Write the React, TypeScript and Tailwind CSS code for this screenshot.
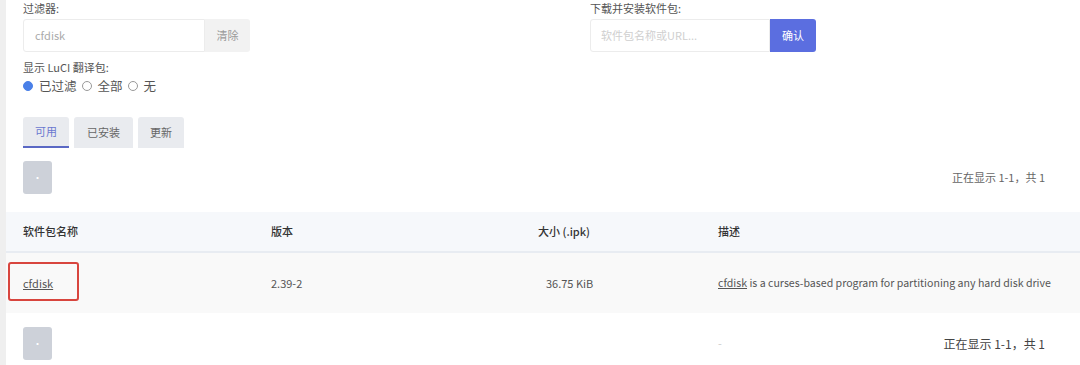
import { useState } from 'react'

const font = { fontFamily: '"Noto Sans CJK SC", "Liberation Sans", sans-serif' }

const tabs = ['可用', '已安装', '更新']

function PagerButton() {
  return (
    <button
      type="button"
      className="flex h-[33px] w-[29px] items-center justify-center rounded-[3px] bg-[#cdd1d9] text-[10px] leading-none text-white"
    >
      ·
    </button>
  )
}

export default function App() {
  const [filter, setFilter] = useState('cfdisk')
  const [mode, setMode] = useState('filtered')

  return (
    <div className="flex h-[365px] w-[1080px] overflow-hidden bg-white text-[11px] text-[#555]" style={font}>
      <div className="w-[6px] shrink-0 bg-[#efefef]" />
      <div className="flex flex-1 flex-col pl-[17px] pr-[35px]">
        <div className="flex">
          <div className="w-[567px] shrink-0">
            <div className="h-[19px] pt-[1px] leading-[14px]">过滤器:</div>
            <div className="flex h-[33px]">
              <input
                value={filter}
                onChange={e => setFilter(e.target.value)}
                className="w-[182px] rounded-l-[3px] border border-[#ececec] bg-white px-[11px] text-[11px] text-[#aaa] outline-none"
              />
              <button type="button" className="w-[45px] rounded-r-[3px] bg-[#f2f2f2] text-[#9a9a9a]">
                清除
              </button>
            </div>
            <div className="mt-[8px] leading-[14px]">显示 LuCI 翻译包:</div>
            <div className="mt-[5px] flex items-center leading-[14px]">
              {[
                ['filtered', '已过滤'],
                ['all', '全部'],
                ['none', '无'],
              ].map(([k, label]) => (
                <label key={k} className="mr-[5px] flex items-center gap-[6px]" onClick={() => setMode(k)}>
                  <span
                    className={`inline-block size-[10px] rounded-full border ${
                      mode === k ? 'border-[#4a80e8] bg-[#4a80e8]' : 'border-[#999] bg-white'
                    }`}
                  />
                  <span className="text-[12.5px]">{label}</span>
                </label>
              ))}
            </div>
          </div>
          <div>
            <div className="h-[19px] pt-[1px] leading-[14px]">下载并安装软件包:</div>
            <div className="flex h-[33px]">
              <input
                placeholder="软件包名称或URL..."
                className="w-[180px] rounded-l-[3px] border border-[#ececec] bg-white px-[10px] text-[11px] text-[#555] outline-none placeholder:text-[#cfcfcf]"
              />
              <button type="button" className="w-[46px] rounded-r-[3px] bg-[#5b6ee0] text-white">
                确认
              </button>
            </div>
          </div>
        </div>

        <div className="mt-[24px] flex gap-[5px]">
          {tabs.map((t, i) => (
            <div
              key={t}
              className={`flex h-[31px] items-center rounded-t-[3px] bg-[#e9ebef] px-[12px] ${
                i === 0 ? 'border-b-2 border-[#5a68c4] text-[#6a78d0]' : 'text-[#666]'
              } ${i === 1 ? 'px-[13px]' : ''}`}
            >
              {t}
            </div>
          ))}
        </div>

        <div className="mt-[13px] flex items-center justify-between">
          <PagerButton />
          <div className="text-[#666]">正在显示 1-1，共 1</div>
        </div>

        <div className="-ml-[17px] -mr-[35px] mt-[18px]">
          <div className="flex h-[41px] items-center border-b-2 border-[#e8ecf2] bg-[#f6f8fb] pl-[17px] font-medium text-[#333]">
            <div className="w-[248px]">软件包名称</div>
            <div className="w-[267px]">版本</div>
            <div className="w-[180px]">大小 (.ipk)</div>
            <div>描述</div>
          </div>
          <div className="flex h-[60px] items-center bg-[#f9f9f9] pl-[17px]">
            <div className="w-[248px]">
              <span className="relative underline">
                cfdisk
                <span className="absolute -left-[15px] -top-[13px] h-[39px] w-[71px] rounded-[3px] border-2 border-[#d8453e]" />
              </span>
            </div>
            <div className="w-[267px]">2.39-2</div>
            <div className="w-[180px] pl-[8px]">36.75 KiB</div>
            <div className="text-[10.6px]">
              <span className="underline">cfdisk</span> is a curses-based program for partitioning any hard disk drive
            </div>
          </div>
        </div>

        <div className="mt-[14px] flex items-center">
          <PagerButton />
          <div className="ml-[666px] text-[#ccc]">-</div>
          <div className="ml-auto text-[12px] text-[#444]">正在显示 1-1，共 1</div>
        </div>
      </div>
    </div>
  )
}
